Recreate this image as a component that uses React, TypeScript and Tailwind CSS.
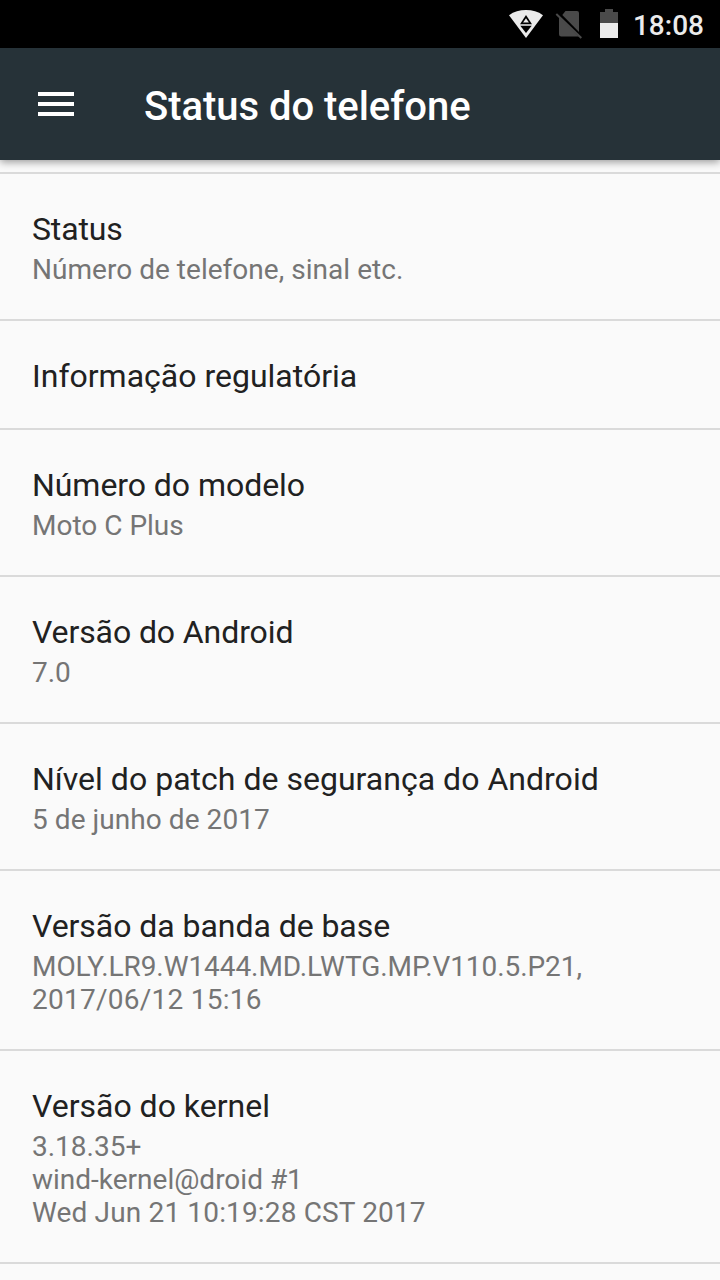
// Phone status screen: device details listed under a dark toolbar.

interface SummaryLine {
    readonly text: string;
    readonly tracking?: string;
}

interface StatusEntry {
    readonly title: string;
    readonly titleTracking?: string;
    readonly summary?: readonly SummaryLine[];
}

const ENTRIES: readonly StatusEntry[] = [
    {
        title: "Status",
        titleTracking: "tracking-[-0.15px]",
        summary: [{ text: "Número de telefone, sinal etc.", tracking: "tracking-[0.03px]" }],
    },
    { title: "Informação regulatória" },
    {
        title: "Número do modelo",
        titleTracking: "tracking-[-0.05px]",
        summary: [{ text: "Moto C Plus" }],
    },
    {
        title: "Versão do Android",
        titleTracking: "tracking-[-0.1px]",
        summary: [{ text: "7.0" }],
    },
    {
        title: "Nível do patch de segurança do Android",
        titleTracking: "tracking-[0.02px]",
        summary: [{ text: "5 de junho de 2017", tracking: "tracking-[0.06px]" }],
    },
    {
        title: "Versão da banda de base",
        titleTracking: "tracking-[-0.05px]",
        summary: [
            { text: "MOLY.LR9.W1444.MD.LWTG.MP.V110.5.P21,", tracking: "tracking-[-0.07px]" },
            { text: "2017/06/12 15:16", tracking: "tracking-[0.25px]" },
        ],
    },
    {
        title: "Versão do kernel",
        summary: [
            { text: "3.18.35+" },
            { text: "wind-kernel@droid #1" },
            { text: "Wed Jun 21 10:19:28 CST 2017", tracking: "tracking-[0.15px]" },
        ],
    },
];

function WifiIcon() {
    return (
        <svg width="36" height="30" viewBox="0 0 36 30" aria-hidden="true">
            <path d="M1 6.200C6 2.600 11.500 1 18 1s12 1.600 17 5.200L18 29z" fill="#ebebeb" />
            <path d="M18 6l6 9.200H12z" fill="#000" />
            <path d="M18 9.300l2.900 4.300h-5.800z" fill="#ebebeb" />
            <path d="M12.300 16.800h11.400L18 24z" fill="#000" />
        </svg>
    );
}

function NoSimIcon() {
    return (
        <svg width="28" height="30" viewBox="0 0 28 30" aria-hidden="true">
            <path d="M10.500 2H22a2 2 0 0 1 2 2v19L7.300 6z" fill="#4a4a4a" />
            <path d="M4 7.500v17.800A2.200 2.200 0 0 0 6.200 27.500h17.600z" fill="#4a4a4a" />
            <path d="M1.300 5l25 24" stroke="#4a4a4a" strokeWidth="2" />
        </svg>
    );
}

function BatteryIcon() {
    return (
        <svg width="20" height="30" viewBox="0 0 20 30" aria-hidden="true">
            <path d="M6 0h8v3h5v11H1V3h5z" fill="#4a4a4a" />
            <path d="M1 14h18v15H1z" fill="#ebebeb" />
        </svg>
    );
}

function StatusBar() {
    return (
        <div className="flex h-12 shrink-0 items-center justify-end bg-black pr-4 text-[#ebebeb]">
            <WifiIcon />
            <span className="w-[11px]" />
            <NoSimIcon />
            <span className="w-4" />
            <BatteryIcon />
            <span className="ml-3.5 pt-[3px] text-[28px] leading-8 font-medium">18:08</span>
        </div>
    );
}

function Toolbar() {
    return (
        <header className="z-10 flex h-28 shrink-0 items-center bg-[#263238] pl-[38px] text-white shadow-[0_2px_8px_rgba(0,0,0,0.4)]">
            <button className="flex w-9 flex-col gap-1.5" aria-label="Menu">
                <span className="h-1 bg-white" />
                <span className="h-1 bg-white" />
                <span className="h-1 bg-white" />
            </button>
            <h1 className="ml-[70px] pt-1.5 text-[40px] leading-12 font-medium tracking-[-0.04px]">
                Status do telefone
            </h1>
        </header>
    );
}

function EntryRow({ title, titleTracking = "", summary }: StatusEntry) {
    return (
        <li className="border-b-2 border-[#dadada] px-8 pt-[34px] pb-[31px]">
            <h2 className={`text-[32px] leading-[42px] text-[#212121] ${titleTracking}`}>{title}</h2>
            {summary && (
                <div className="pt-[3px] pb-0.5 text-[28px] leading-[33px] text-[#757575]">
                    {summary.map(({ text, tracking }) => (
                        <p key={text} className={tracking}>
                            {text}
                        </p>
                    ))}
                </div>
            )}
        </li>
    );
}

export default function App() {
    return (
        <div className="flex h-[1280px] w-[720px] flex-col overflow-hidden bg-[#fafafa] font-[Roboto,sans-serif]">
            <StatusBar />
            <Toolbar />
            <ul className="mt-3 border-t-2 border-[#dadada]">
                {ENTRIES.map((entry) => (
                    <EntryRow key={entry.title} {...entry} />
                ))}
            </ul>
        </div>
    );
}
